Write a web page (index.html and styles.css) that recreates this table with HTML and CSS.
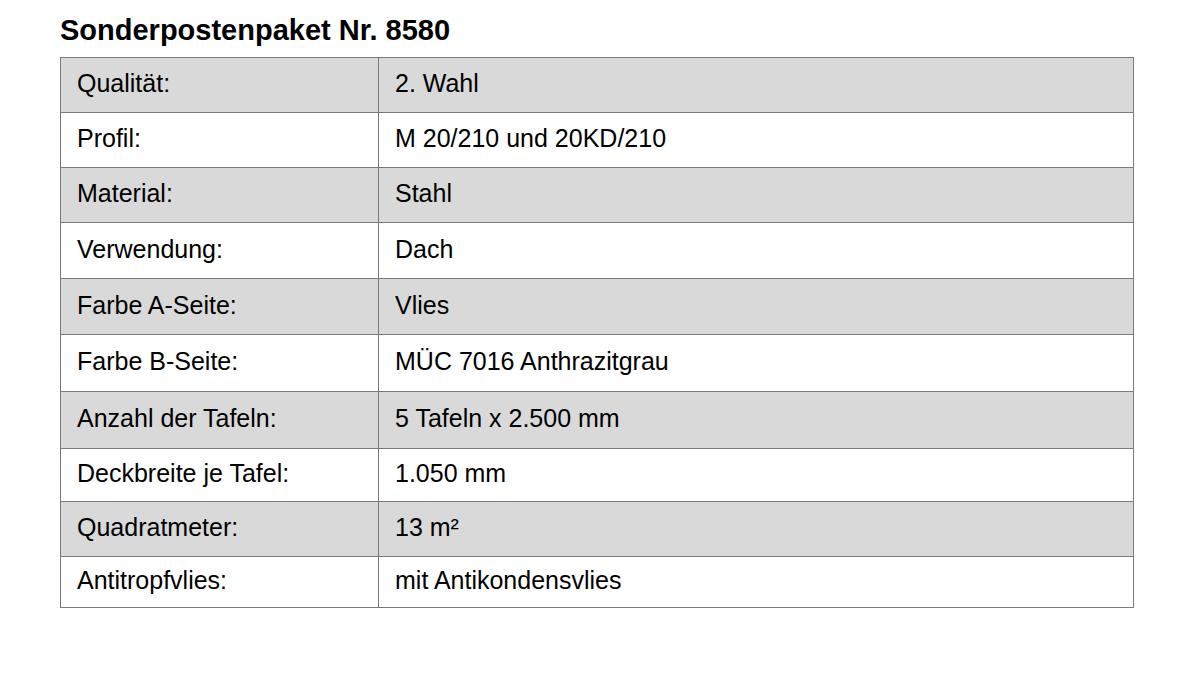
FILE: index.html
```html
<!DOCTYPE html>
<html lang="de">
<head>
<meta charset="utf-8">
<title>Sonderpostenpaket Nr. 8580</title>
<link rel="stylesheet" href="styles.css">
</head>
<body>
<main class="page">
  <h1 class="title">Sonderpostenpaket Nr. 8580</h1>
  <table class="spec">
    <tbody>
      <tr class="shade"><td class="key">Qualität:</td><td>2. Wahl</td></tr>
      <tr><td class="key">Profil:</td><td>M 20/210 und 20KD/210</td></tr>
      <tr class="shade"><td class="key">Material:</td><td>Stahl</td></tr>
      <tr><td class="key">Verwendung:</td><td>Dach</td></tr>
      <tr class="shade"><td class="key">Farbe A-Seite:</td><td>Vlies</td></tr>
      <tr><td class="key">Farbe B-Seite:</td><td>MÜC 7016 Anthrazitgrau</td></tr>
      <tr class="shade"><td class="key">Anzahl der Tafeln:</td><td>5 Tafeln x 2.500 mm</td></tr>
      <tr><td class="key">Deckbreite je Tafel:</td><td>1.050 mm</td></tr>
      <tr class="shade"><td class="key">Quadratmeter:</td><td>13 m²</td></tr>
      <tr><td class="key">Antitropfvlies:</td><td>mit Antikondensvlies</td></tr>
    </tbody>
  </table>
</main>
</body>
</html>
```

FILE: styles.css
```css
html, body {
  margin: 0;
  padding: 0;
  background: #ffffff;
}

body {
  font-family: "Liberation Sans", Arial, sans-serif;
  color: #000000;
}

.page {
  padding: 13px 0 0 60px;
}

.title {
  margin: 0 0 10px 0;
  font-size: 29px;
  font-weight: bold;
  line-height: 34px;
}

.spec {
  width: 1074px;
  border-collapse: collapse;
  font-size: 25px;
}

.spec td {
  height: 55px;
  box-sizing: border-box;
  padding: 0 16px 4px 16px;
  border: 1px solid #7a7a7a;
  vertical-align: middle;
  line-height: 28px;
}

.spec tr:nth-child(4) td,
.spec tr:nth-child(5) td { height: 56px; }
.spec tr:nth-child(6) td,
.spec tr:nth-child(7) td { height: 57px; }
.spec tr:nth-child(8) td { height: 53px; }
.spec tr:nth-child(10) td { height: 51px; }

.spec td.key {
  width: 318px;
}

.spec tr.shade td {
  background: #d9d9d9;
}
```
